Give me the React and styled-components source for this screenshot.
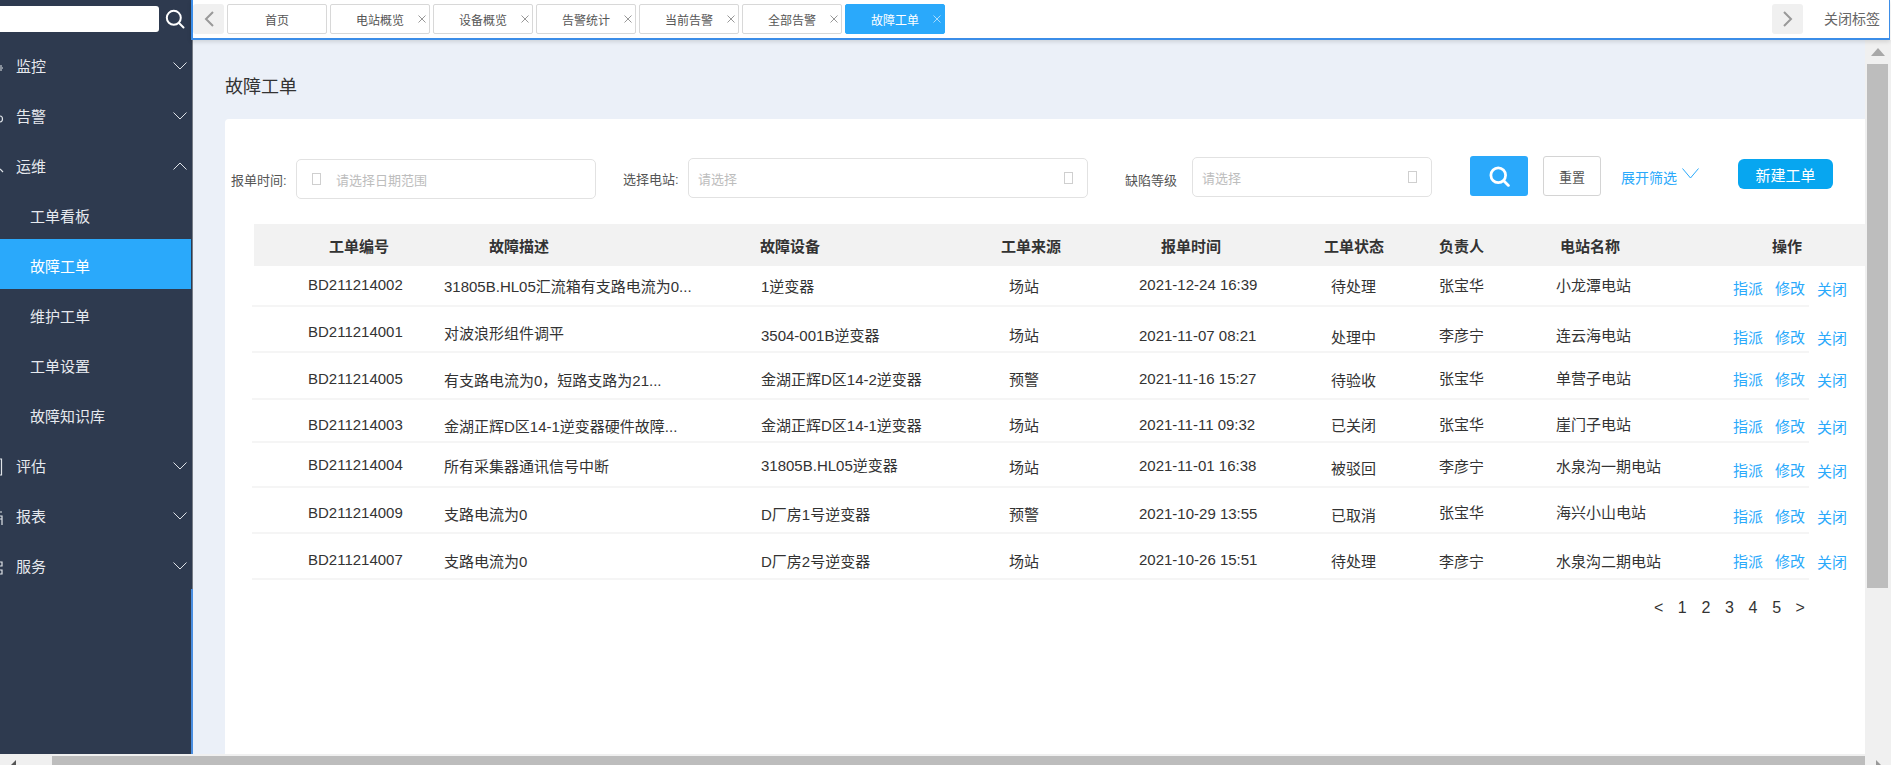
import React from 'react';
import styled, { createGlobalStyle } from 'styled-components';

const GlobalStyle = createGlobalStyle`
  html, body { margin: 0; padding: 0; overflow: hidden; }
  * { box-sizing: border-box; }
  body {
    font-family: "Liberation Sans", "Noto Sans CJK SC", sans-serif;
    color: #333;
    background: #fff;
  }
`;

const menu = [
  { label: '监控', arrow: 'down', mark: 'M0 1h2M0 3h3M0 5h2' },
  { label: '告警', arrow: 'down', mark: 'M0 1c2 0 2.5 2 2.5 3S2 7 0 7' },
  { label: '运维', arrow: 'up', mark: 'M0 4l3 3' },
  { label: '工单看板', sub: true },
  { label: '故障工单', sub: true, active: true },
  { label: '维护工单', sub: true },
  { label: '工单设置', sub: true },
  { label: '故障知识库', sub: true },
  { label: '评估', arrow: 'down', mark: 'M0 -6h1.5v16H0' },
  { label: '报表', arrow: 'down', mark: 'M0 -3h2M0 1h2v9M0 4h2' },
  { label: '服务', arrow: 'down', mark: 'M0 -3h2v4H0M0 5h2v4H0' },
];

const tabs = ['首页', '电站概览', '设备概览', '告警统计', '当前告警', '全部告警', '故障工单'];

// tops: distance of each cell from the row top, the columns do not share a baseline in the original
const rows = [
  { h: 41, tops: [9, 11, 11, 11, 9, 11, 10, 10, 13], cells: ['BD211214002', '31805B.HL05汇流箱有支路电流为0...', '1逆变器', '场站', '2021-12-24 16:39', '待处理', '张宝华', '小龙潭电站'] },
  { h: 46, tops: [15, 17, 19, 19, 19, 21, 19, 19, 21], cells: ['BD211214001', '对波浪形组件调平', '3504-001B逆变器', '场站', '2021-11-07 08:21', '处理中', '李彦宁', '连云海电站'] },
  { h: 47, tops: [16, 18, 17, 17, 16, 18, 16, 16, 17], cells: ['BD211214005', '有支路电流为0，短路支路为21...', '金湖正辉D区14-2逆变器', '预警', '2021-11-16 15:27', '待验收', '张宝华', '单营子电站'] },
  { h: 43, tops: [15, 17, 16, 16, 15, 16, 15, 15, 17], cells: ['BD211214003', '金湖正辉D区14-1逆变器硬件故障...', '金湖正辉D区14-1逆变器', '场站', '2021-11-11 09:32', '已关闭', '张宝华', '崖门子电站'] },
  { h: 45, tops: [12, 14, 13, 15, 13, 16, 14, 14, 18], cells: ['BD211214004', '所有采集器通讯信号中断', '31805B.HL05逆变器', '场站', '2021-11-01 16:38', '被驳回', '李彦宁', '水泉沟一期电站'] },
  { h: 46, tops: [15, 17, 17, 17, 16, 18, 15, 15, 19], cells: ['BD211214009', '支路电流为0', 'D厂房1号逆变器', '预警', '2021-10-29 13:55', '已取消', '张宝华', '海兴小山电站'] },
  { h: 46, tops: [16, 18, 18, 18, 16, 18, 18, 18, 18], cells: ['BD211214007', '支路电流为0', 'D厂房2号逆变器', '场站', '2021-10-26 15:51', '待处理', '李彦宁', '水泉沟二期电站'] },
];

const headers = ['工单编号', '故障描述', '故障设备', '工单来源', '报单时间', '工单状态', '负责人', '电站名称', '操作'];

const SearchIcon = ({ size = 20, width = 2 }) => (
  <svg width={size} height={size} viewBox="0 0 20 20" fill="none" stroke="#fff" strokeWidth={width} strokeLinecap="round">
    <circle cx="8.8" cy="8.8" r="7" />
    <path d="M14 14l4.5 4.5" />
  </svg>
);

const Chevron = ({ up }) => (
  <svg width="14" height="8" viewBox="0 0 14 8" fill="none" stroke="#dfe3e8" strokeWidth="1">
    <path d={up ? 'M0.5 7.5L7 1l6.5 6.5' : 'M0.5 0.5L7 7l6.5-6.5'} />
  </svg>
);

const App = () => {
  return (
    <Page>
      <GlobalStyle />
      <Main>
        <Sidebar>
          <SearchRow>
            <SearchInput />
            <SearchIcon />
          </SearchRow>
          {menu.map((item) => (
            <MenuItem key={item.label} $sub={item.sub} $active={item.active}>
              {item.mark && (
                <Mark width="3" height="16" viewBox="0 -6 3 16" fill="none" stroke="#dfe3e8" strokeWidth="1.2">
                  <path d={item.mark} />
                </Mark>
              )}
              <MenuLabel>{item.label}</MenuLabel>
              {item.arrow && <Chevron up={item.arrow === 'up'} />}
            </MenuItem>
          ))}
        </Sidebar>

        <Right>
          <TabBar>
            <ScrollTab>
              <svg width="10" height="16" viewBox="0 0 10 16" fill="none" stroke="#999" strokeWidth="2">
                <path d="M9 1L2 8l7 7" />
              </svg>
            </ScrollTab>
            <Tabs>
              {tabs.map((tab, i) => (
                <Tab key={tab} $active={i === tabs.length - 1}>
                  {tab}
                  {i > 0 && (
                    <TabClose width="8" height="8" viewBox="0 0 8 8" stroke="currentColor" strokeWidth="1">
                      <path d="M0.5 0.5l7 7M7.5 0.5l-7 7" />
                    </TabClose>
                  )}
                </Tab>
              ))}
            </Tabs>
            <ScrollTab $right>
              <svg width="10" height="16" viewBox="0 0 10 16" fill="none" stroke="#999" strokeWidth="2">
                <path d="M1 1l7 7-7 7" />
              </svg>
            </ScrollTab>
            <CloseTabs>关闭标签</CloseTabs>
          </TabBar>

          <Workspace>
            <Rail />
            <Content>
              <Title>故障工单</Title>
              <Card>
                <Filters>
                  <Field $top={40} $left={6}>
                    <FieldLabel $w={55}>报单时间:</FieldLabel>
                    <Select $w={300} $gap={10}>
                      <Tofu $inset />
                      <Placeholder>请选择日期范围</Placeholder>
                    </Select>
                  </Field>
                  <Field $top={39} $left={27}>
                    <FieldLabel $w={56}>选择电站:</FieldLabel>
                    <Select $w={400} $gap={9}>
                      <Placeholder>请选择</Placeholder>
                      <Tofu />
                    </Select>
                  </Field>
                  <Field $top={38} $left={37}>
                    <FieldLabel $w={52} $low>缺陷等级</FieldLabel>
                    <Select $w={240} $gap={15}>
                      <Placeholder>请选择</Placeholder>
                      <Tofu />
                    </Select>
                  </Field>
                  <SearchButton>
                    <SearchIcon size={21} width={2.6} />
                  </SearchButton>
                  <ResetButton>重置</ResetButton>
                  <Expand>
                    展开筛选
                    <svg width="17" height="11" viewBox="0 0 17 11" fill="none" stroke="#2aa9fb" strokeWidth="1">
                      <path d="M0.5 0.5L8.5 10l8-9.5" />
                    </svg>
                  </Expand>
                  <NewButton>新建工单</NewButton>
                </Filters>

                <TableWrap>
                  <HeadRow>
                    {headers.map((h) => (
                      <HeadCell key={h}>{h}</HeadCell>
                    ))}
                  </HeadRow>
                  {rows.map((row) => (
                    <Row key={row.cells[0]} style={{ height: row.h }}>
                      {row.cells.map((cell, i) => (
                        <Cell key={i} $top={row.tops[i]}>{cell}</Cell>
                      ))}
                      <Actions $top={row.tops[8]}>
                        <ActionLink>指派</ActionLink>
                        <ActionLink>修改</ActionLink>
                        <ActionLink $low>关闭</ActionLink>
                      </Actions>
                    </Row>
                  ))}
                  <Pagination>
                    {['<', '1', '2', '3', '4', '5', '>'].map((p) => (
                      <PageItem key={p}>{p}</PageItem>
                    ))}
                  </Pagination>
                </TableWrap>
              </Card>
            </Content>
            <VScroll>
              <svg width="14" height="8" viewBox="0 0 14 8" fill="#a8a8a8">
                <path d="M7 0l7 8H0z" />
              </svg>
              <VThumb />
            </VScroll>
          </Workspace>
        </Right>
      </Main>

      <HScroll>
        <ScrollArrow width="5" height="5" viewBox="0 0 5 5" fill="#555">
          <path d="M5 0v5H0z" />
        </ScrollArrow>
        <HThumb />
        <ScrollArrow width="5" height="5" viewBox="0 0 5 5" fill="#999">
          <path d="M0 0l5 5H0z" />
        </ScrollArrow>
      </HScroll>
    </Page>
  );
};

const Page = styled.div`
  width: 1891px;
  height: 765px;
  display: flex;
  flex-direction: column;
  overflow: hidden;
`;

const Main = styled.div`
  display: flex;
  height: 754px;
`;

const Sidebar = styled.aside`
  width: 191px;
  flex: none;
  background: #2e3a4f;
  color: #e6e9ee;
`;

const SearchRow = styled.div`
  height: 39px;
  padding-top: 6px;
  display: flex;
  align-items: flex-start;
  gap: 6px;

  svg {
    margin-top: 3px;
  }
`;

const SearchInput = styled.div`
  width: 159px;
  height: 26px;
  background: #fff;
  border-radius: 0 3px 3px 0;
`;

const MenuItem = styled.div`
  height: 50px;
  display: flex;
  align-items: center;
  position: relative;
  padding: 3px 4px 0 ${(p) => (p.$sub ? 30 : 16)}px;
  font-size: 15px;
  background: ${(p) => (p.$active ? '#2aa9fb' : 'transparent')};
  color: ${(p) => (p.$active ? '#fff' : '#e6e9ee')};
`;

const Mark = styled.svg`
  position: absolute;
  left: 0;
  top: 20px;
  overflow: visible;
`;

const MenuLabel = styled.span`
  flex: 1;
`;

const Right = styled.div`
  width: 1700px;
  flex: none;
  display: flex;
  flex-direction: column;
`;

const TabBar = styled.div`
  width: 1699px;
  height: 40px;
  flex: none;
  display: flex;
  padding-top: 4px;
  background: #fff;
  border-left: 2px solid #3b8de8;
  border-right: 1px solid #3b8de8;
  border-bottom: 2px solid #3b8de8;
  box-shadow: 0 2px 4px rgba(0, 0, 0, 0.12);
  position: relative;
  z-index: 1;
`;

const ScrollTab = styled.div`
  width: 31px;
  height: 30px;
  flex: none;
  display: flex;
  align-items: center;
  justify-content: center;
  background: #f0f0f0;
  border-radius: 3px;
  margin-left: ${(p) => (p.$right ? 'auto' : '0')};
`;

const Tabs = styled.div`
  display: flex;
  gap: 3px;
  margin-left: 3px;
`;

const Tab = styled.div`
  width: 100px;
  height: 30px;
  position: relative;
  display: flex;
  align-items: center;
  justify-content: center;
  font-size: 12px;
  border-radius: 2px;
  color: ${(p) => (p.$active ? '#fff' : '#555')};
  background: ${(p) => (p.$active ? '#2aa9fb' : '#fff')};
  border: 1px solid ${(p) => (p.$active ? '#2aa9fb' : '#d8d8d8')};
`;

const TabClose = styled.svg`
  position: absolute;
  right: 3px;
  top: 10px;
  opacity: 0.6;
`;

const CloseTabs = styled.div`
  margin-left: 21px;
  width: 56px;
  margin-right: 9px;
  font-size: 14px;
  line-height: 30px;
  color: #666;
  white-space: nowrap;
`;

const Workspace = styled.div`
  flex: 1;
  display: flex;
  min-height: 0;
`;

const Rail = styled.div`
  width: 2px;
  flex: none;
  background:
    linear-gradient(#767c86, #767c86) right top / 1px 549px no-repeat,
    linear-gradient(#2e3a4f, #2e3a4f) left top / 1px 549px no-repeat,
    #4a8ee0;
`;

const Content = styled.main`
  width: 1672px;
  flex: none;
  display: flex;
  flex-direction: column;
  padding-left: 32px;
  background: #ebf0f8;
`;

const Title = styled.h1`
  height: 79px;
  flex: none;
  margin: 0;
  padding-top: 10px;
  display: flex;
  align-items: center;
  font-size: 18px;
  font-weight: 400;
  color: #333;
`;

const Card = styled.section`
  flex: 1;
  background: #fff;
  border-radius: 4px 0 0 0;
`;

const Filters = styled.div`
  height: 105px;
  display: flex;
  align-items: flex-start;
`;

const Field = styled.div`
  display: flex;
  align-items: center;
  margin-top: ${(p) => p.$top}px;
  margin-left: ${(p) => p.$left}px;
`;

const FieldLabel = styled.label`
  width: ${(p) => p.$w}px;
  font-size: 13px;
  color: #555;
  white-space: nowrap;
  padding-top: ${(p) => (p.$low ? 4 : 0)}px;
`;

const Select = styled.div`
  width: ${(p) => p.$w}px;
  height: 40px;
  margin-left: ${(p) => p.$gap}px;
  padding: 0 14px 0 9px;
  display: flex;
  align-items: center;
  justify-content: space-between;
  border: 1px solid #e2e2e2;
  border-radius: 5px;
`;

const Placeholder = styled.span`
  font-size: 13px;
  color: #bdbdbd;
`;

const Tofu = styled.i`
  width: 9px;
  height: 12px;
  flex: none;
  margin-left: ${(p) => (p.$inset ? '6px' : '0')};
  margin-right: ${(p) => (p.$inset ? '15px' : '0')};
  border: 1.5px solid #cfcfcf;

  & + span {
    margin-right: auto;
  }
`;

const SearchButton = styled.button`
  width: 58px;
  height: 40px;
  margin: 37px 0 0 38px;
  padding: 0;
  display: flex;
  align-items: center;
  justify-content: center;
  border: none;
  border-radius: 3px;
  background: #2aa9fb;
`;

const ResetButton = styled.button`
  width: 58px;
  height: 40px;
  margin: 37px 0 0 15px;
  padding: 0;
  font-family: inherit;
  font-size: 13px;
  color: #555;
  background: #fff;
  border: 1px solid #d4d4d4;
  border-radius: 3px;
`;

const Expand = styled.div`
  margin: 49px 0 0 20px;
  display: flex;
  align-items: flex-start;
  gap: 5px;
  font-size: 14px;
  line-height: 20px;
  color: #2aa9fb;
  white-space: nowrap;
`;

const NewButton = styled.button`
  width: 95px;
  height: 30px;
  margin: 40px 0 0 39px;
  padding: 0;
  font-family: inherit;
  font-size: 15px;
  color: #fff;
  background: #07a6f0;
  border: none;
  border-radius: 6px;
`;

const TableWrap = styled.div`
  margin-left: 29px;
`;

const HeadRow = styled.div`
  height: 42px;
  padding-left: 75px;
  display: grid;
  grid-template-columns: 160px 271px 241px 160px 163px 115px 121px 212px 1fr;
  align-items: center;
  background: #f2f2f2;
`;

const HeadCell = styled.div`
  font-size: 15px;
  font-weight: 700;
  color: #333;
  white-space: nowrap;
`;

const Row = styled.div`
  width: 1557px;
  margin-left: -2px;
  padding-left: 56px;
  display: grid;
  grid-template-columns: 136px 317px 248px 130px 192px 108px 117px 177px 114px;
  align-items: start;
  border-bottom: 2px solid #f5f5f5;
`;

const Cell = styled.div`
  padding-top: ${(p) => p.$top}px;
  font-size: 15px;
  line-height: 20px;
  color: #333;
  white-space: nowrap;
`;

const Actions = styled.div`
  padding-top: ${(p) => p.$top}px;
  display: flex;
  gap: 12px;
`;

const ActionLink = styled.a`
  font-size: 15px;
  line-height: 20px;
  color: #2aa9fb;
  white-space: nowrap;
  padding-top: ${(p) => (p.$low ? 1 : 0)}px;
`;

const Pagination = styled.div`
  width: 1558px;
  margin-top: 18px;
  display: flex;
  justify-content: flex-end;
`;

const PageItem = styled.span`
  width: 23.6px;
  text-align: center;
  font-size: 16px;
  line-height: 20px;
  color: #333;
`;

const VScroll = styled.div`
  width: 26px;
  flex: none;
  padding: 8px 3px 0 2px;
  display: flex;
  flex-direction: column;
  align-items: center;
  background: #f0f0f0;
`;

const VThumb = styled.div`
  width: 21px;
  height: 524px;
  margin-top: 8px;
  background: #bdbdbd;
`;

const HScroll = styled.div`
  height: 11px;
  display: flex;
  align-items: flex-end;
  padding-top: 2px;
  background: #f0f0f0;
`;

const ScrollArrow = styled.svg`
  flex: none;
  margin: 0 10px 0 11px;
  align-self: flex-end;
`;

const HThumb = styled.div`
  width: 1818px;
  height: 9px;
  margin-left: 26px;
  background: #bdbdbd;
`;

export default App;
